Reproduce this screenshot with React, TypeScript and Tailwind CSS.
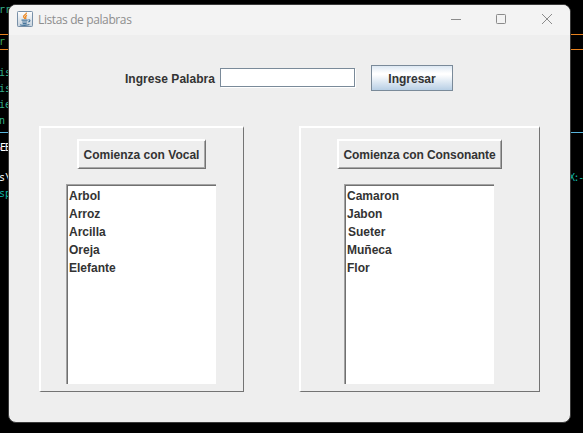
import React from "react";

const vowels = ["Arbol", "Arroz", "Arcilla", "Oreja", "Elefante"];
const consonants = ["Camaron", "Jabon", "Sueter", "Muñeca", "Flor"];

function Terminal() {
  return (
    <div className="flex h-[433px] w-[583px] flex-col overflow-hidden bg-black font-['DejaVu_Sans_Mono',monospace] text-[10px] leading-4 whitespace-pre text-[#35b08a]">
      <div className="h-[34px] pt-[2px]">
        <div className="-ml-px">rr</div>
      </div>
      <div className="h-4 border-y border-[#e8821e] leading-[13px] text-[#3fae62]">
        <span className="-ml-px">r</span>
      </div>
      <div className="h-[82px] pt-[15px]">
        <div className="-ml-px">is</div>
        <div className="-ml-px">is</div>
        <div className="-ml-px">ie</div>
        <div className="-ml-px">n</div>
      </div>
      <div className="h-px bg-[#58b4dc]" />
      <div className="flex items-center pt-[7px] text-white">
        <span className="h-[3px] w-px shrink-0 bg-[#c8281e]" />
        <span className="-ml-px tracking-[-1px]">EB</span>
      </div>
      <div className="mt-[14px] flex justify-between text-white">
        <span className="-ml-px">s\</span>
        <span className="w-[14px] tracking-[-1.4px] text-[#12b5a5]">X:-</span>
      </div>
      <div className="-ml-px text-[#12b5a5]">sp</div>
    </div>
  );
}

function JavaIcon() {
  return (
    <svg width="16" height="16" viewBox="0 0 16 16" fill="none">
      <defs>
        <linearGradient id="tile" x1="0" y1="0" x2="0" y2="1">
          <stop offset="0" stopColor="#ffffff" />
          <stop offset="1" stopColor="#c5d1dc" />
        </linearGradient>
      </defs>
      <rect x="0.5" y="0.5" width="15" height="15" rx="0.8" fill="url(#tile)" stroke="#7890a8" />
      <path d="M9.4 1.7C9.8 3.5 6.3 4.1 6.6 5.6C6.7 6.5 7.8 6.9 7.8 8M10 4.4C8.4 5.1 8.2 5.8 8.8 6.5C9.1 7 8.7 7.6 8.5 7.9" stroke="#ed8a25" strokeWidth="1.3" />
      <path d="M4.5 9.1H10.7M5.2 11H10.2M5.7 12.6H9.6M3.1 13.8C5 14.6 10.5 14.6 12.4 13.6M11.4 8.9C13.6 8.4 13.4 10.5 11.2 11" stroke="#46759b" strokeWidth="1.1" />
    </svg>
  );
}

function TitleBar() {
  return (
    <div className="flex h-[30px] shrink-0 items-center bg-[#f3f3f3] pl-2">
      <div className="-mt-[2px]"><JavaIcon /></div>
      <span className="ml-[5px] font-['Open_Sans',sans-serif] text-[12px] tracking-[-0.38px] text-[#8e8e8e]">Listas de palabras</span>
      <svg className="-mt-[2px] mr-[16px] ml-auto h-[12px] w-[104px]" viewBox="0 0 104 12" fill="none" stroke="#8b8b8b">
        <path d="M1 6.5H11" />
        <rect x="46.5" y="1.5" width="9" height="9" rx="0.8" />
        <path d="M92 1L102 11M102 1L92 11" />
      </svg>
    </div>
  );
}

type GroupProps = { title: string; words: string[]; wide?: boolean };

function WordGroup({ title, words, wide }: GroupProps) {
  return (
    <section className={`h-[266px] shrink-0 border-t-2 border-r border-b border-l-2 border-t-white border-r-[#737373] border-b-[#737373] border-l-white pt-[11px] ${wide ? "w-[241px]" : "w-[205px]"}`}>
      <button className={`ml-[36px] block h-[30px] border-t-2 border-r border-b border-l-2 border-t-white border-r-[#737373] border-b-[#737373] border-l-white ${wide ? "w-[165px] tracking-[-0.09px]" : "w-[129px]"}`}>
        <span className="flex h-full items-center justify-center border-r border-b border-[#a8a8a8] pt-[2px] whitespace-nowrap">{title}</span>
      </button>
      <div className={`mt-[15px] h-[200px] w-[150px] border-t border-l border-[#a3a3a3] bg-white ${wide ? "ml-[43px]" : "ml-[25px]"}`}>
        <ul className="h-full border-t border-l border-[#707070] pt-[1px] pl-px">
          {words.map((word) => (
            <li key={word} className={`h-[18px] leading-[18px] ${word === "Sueter" ? "pl-px" : ""}`}>{word}</li>
          ))}
        </ul>
      </div>
    </section>
  );
}

export default function App() {
  return (
    <main className="relative h-[433px] w-[583px] overflow-hidden">
      <Terminal />
      <div className="absolute top-[4px] left-[8px] flex h-[419px] w-[563px] flex-col overflow-hidden rounded-[8px] border border-[#3a3a3a] bg-[#eeeeee] font-['Liberation_Sans',Arial,sans-serif] text-[12px] font-bold text-[#333333]">
        <div className="font-normal"><TitleBar /></div>
        <div className="mt-[30px] flex h-[26px] items-start pl-[116px]">
          <label htmlFor="word" className="mt-[5px] w-[95px] leading-[18px] tracking-[0.04px] whitespace-nowrap">Ingrese Palabra</label>
          <input id="word" className="mt-[3px] h-[19px] w-[135px] border border-[#7a8a99] bg-white shadow-[1px_1px_0_#ffffff] outline-none" />
          <button className="ml-4 h-[26px] w-[82px] border border-[#7a8a99] bg-[linear-gradient(180deg,#dde8f3_0%,#ffffff_30%,#ffffff_36%,#b8cfe5_100%)] pt-[2px]">Ingresar</button>
        </div>
        <div className="mt-[35px] flex pl-[30px]">
          <WordGroup title="Comienza con Vocal" words={vowels} />
          <div className="w-[55px] shrink-0" />
          <WordGroup title="Comienza con Consonante" words={consonants} wide />
        </div>
      </div>
    </main>
  );
}
